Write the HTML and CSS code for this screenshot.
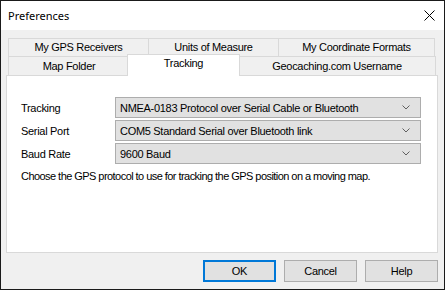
FILE: index.html
```html
<!DOCTYPE html>
<html lang="en">
<head>
  <meta charset="UTF-8">
  <title>Preferences</title>
  <link rel="stylesheet" href="styles.css">
</head>
<body>
  <div class="window">
    <div class="titlebar">
      <span class="title">Preferences</span>
      <svg class="close" width="11" height="11" viewBox="0 0 11 11">
        <path d="M0.5 0.5 L10.5 10.5 M10.5 0.5 L0.5 10.5" stroke="#000" stroke-width="1" fill="none"/>
      </svg>
    </div>

    <div class="content">
      <div class="tabs">
        <div class="tab-row">
          <div class="tab w-gps">My GPS Receivers</div>
          <div class="tab w-units">Units of Measure</div>
          <div class="tab w-coord">My Coordinate Formats</div>
        </div>
        <div class="tab-row">
          <div class="tab w-map">Map Folder</div>
          <div class="tab selected w-track">Tracking</div>
          <div class="tab w-geo">Geocaching.com Username</div>
        </div>
      </div>

      <div class="panel">
        <div class="form">
          <label>Tracking</label>
          <div class="combo">NMEA-0183 Protocol over Serial Cable or Bluetooth
            <svg class="chev" width="8" height="5" viewBox="0 0 8 5"><path d="M0.5 0.5 L4 4 L7.5 0.5" stroke="#606060" fill="none"/></svg>
          </div>
          <label>Serial Port</label>
          <div class="combo">COM5 Standard Serial over Bluetooth link
            <svg class="chev" width="8" height="5" viewBox="0 0 8 5"><path d="M0.5 0.5 L4 4 L7.5 0.5" stroke="#606060" fill="none"/></svg>
          </div>
          <label>Baud Rate</label>
          <div class="combo">9600 Baud
            <svg class="chev" width="8" height="5" viewBox="0 0 8 5"><path d="M0.5 0.5 L4 4 L7.5 0.5" stroke="#606060" fill="none"/></svg>
          </div>
        </div>
        <p class="hint">Choose the GPS protocol to use for tracking the GPS position on a moving map.</p>
      </div>

      <div class="buttons">
        <button class="btn default">OK</button>
        <button class="btn">Cancel</button>
        <button class="btn">Help</button>
      </div>
    </div>
  </div>
</body>
</html>
```

FILE: styles.css
```css
body {
  margin: 0;
  padding: 0;
  background: #fff;
  font-family: "Liberation Sans", Arial, sans-serif;
  font-size: 11px;
  letter-spacing: -0.3px;
  color: #000;
}

.window {
  width: 445px;
  height: 290px;
  box-sizing: border-box;
  border: 1px solid #1a1a1a;
  display: flex;
  flex-direction: column;
}

.titlebar {
  height: 29px;
  background: #fff;
  display: flex;
  align-items: center;
  justify-content: space-between;
  padding: 0 9px 0 7px;
}

.title {
  font-family: "Noto Sans", sans-serif;
  font-size: 11px;
  letter-spacing: 0;
  margin-top: -1px;
}

.content {
  flex: 1;
  background: #f0f0f0;
  padding: 8px 6px 7px 5px;
  display: flex;
  flex-direction: column;
}

.tabs {
  padding: 0 2px;
}

.tab-row {
  display: flex;
}

.tab {
  box-sizing: border-box;
  height: 18px;
  border: 1px solid #d9d9d9;
  border-bottom: none;
  margin-left: -1px;
  background: #f0f0f0;
  text-align: center;
  line-height: 17px;
}

.tab:first-child {
  margin-left: 0;
}

.tab-row + .tab-row .tab {
  height: 19px;
  line-height: 19px;
}

.w-gps { width: 141px; }
.w-units { width: 131px; }
.w-coord { width: 157px; }
.w-map { width: 122px; }
.w-track { width: 109px; }
.w-geo { width: 199px; }

.tab-row + .tab-row .tab.selected {
  position: relative;
  z-index: 1;
  background: #fff;
  height: 22px;
  line-height: 17px;
  margin: -2px -2px -1px -3px;
  width: 113px;
}

.tab.selected + .tab {
  margin-left: 0;
  width: 198px;
}

.panel {
  height: 178px;
  box-sizing: border-box;
  background: #fff;
  border: 1px solid #d9d9d9;
  padding: 21px 14px 0 14px;
}

.form {
  display: grid;
  grid-template-columns: 94px 306px;
  row-gap: 2px;
  align-items: center;
}

.combo {
  box-sizing: border-box;
  height: 21px;
  background: #e1e1e1;
  border: 1px solid #adadad;
  padding: 0 10px 0 4px;
  display: flex;
  align-items: center;
  justify-content: space-between;
}

.chev {
  flex: none;
}

.hint {
  margin: 6px 0 0;
  letter-spacing: -0.55px;
}

.buttons {
  margin-top: auto;
  display: flex;
  justify-content: flex-end;
  gap: 8px;
}

.btn {
  width: 73px;
  height: 22px;
  box-sizing: border-box;
  background: #e1e1e1;
  border: 1px solid #adadad;
  font-family: "Liberation Sans", Arial, sans-serif;
  font-size: 11px;
  letter-spacing: -0.3px;
  color: #000;
  padding: 0;
}

.btn.default {
  border: 2px solid #0078d7;
}
```
